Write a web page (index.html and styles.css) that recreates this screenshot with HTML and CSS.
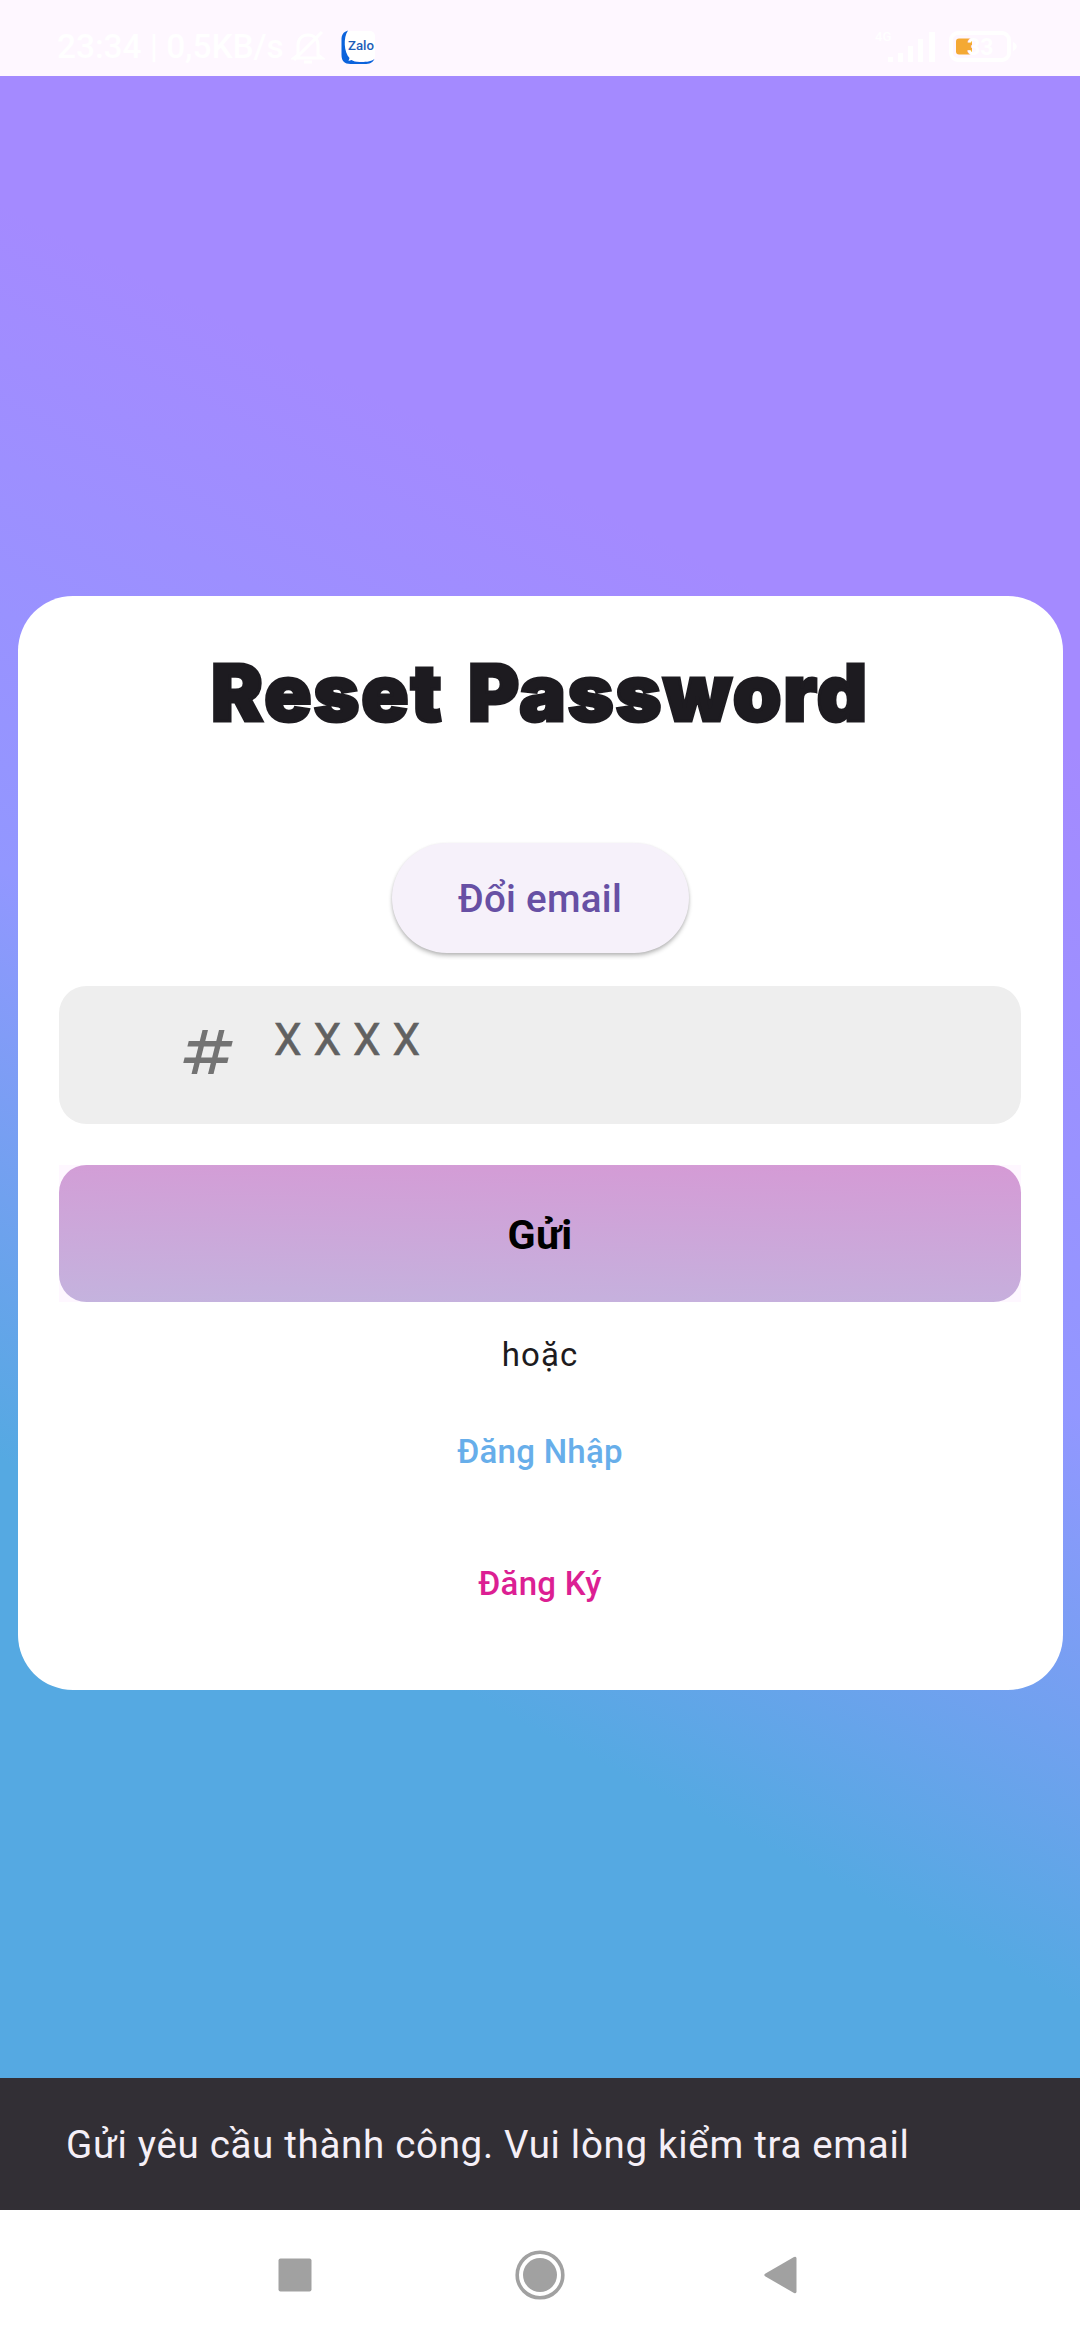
FILE: index.html
```html
<!DOCTYPE html>
<html lang="vi">
<head>
<meta charset="utf-8">
<title>Reset Password</title>
<link rel="stylesheet" href="styles.css">
</head>
<body>
<header class="status">
  <span class="status-text">23:34 | 0,5KB/s</span>
  <svg class="mute" viewBox="0 0 34 36" fill="none" stroke="currentColor" stroke-width="3"><path d="M7 26V16c0-6 4-10 10-10s10 4 10 10v10l4 3H3zM13 33h8M3 31 31 3"/></svg>
  <svg class="zalo" viewBox="0 0 34 35"><rect x="2" y="1" width="32" height="30" rx="5" fill="#fff"/><path d="M7 .5C2 2 .5 5 .5 10v15c0 6 3 9 9 9h14c5 0 8-1 10-5-4 3-10 3-15 3-4 0-6-1-8-2l-3 1 1-3C3 22 2 8 7 .5z" fill="#0b63dc"/><text class="zalo-text" x="7" y="20" textLength="26" lengthAdjust="spacingAndGlyphs">Zalo</text></svg>
  <span class="spacer"></span>
  <svg class="signal" viewBox="0 0 66 36"><text class="net" x="5" y="12">4G</text><path d="M18 28h5v5h-5zM28 24h5v9h-5zM38 17h5v16h-5zM48 10h5v23h-5zM59 3h6v30h-6z" fill="currentColor"/></svg>
  <svg class="battery" viewBox="0 0 70 32"><rect x="2" y="2" width="58" height="27" rx="7" fill="none" stroke="currentColor" stroke-width="4"/><path d="M64 11c5 2 5 7 0 9z" fill="currentColor"/><rect x="7" y="7.500" width="16" height="16" rx="3" fill="#f4a934"/><text class="charge" x="18" y="24">33</text></svg>
</header>
<main class="screen">
  <section class="card">
    <h1 class="title">Reset Password</h1>
    <button class="change">Đổi email</button>
    <label class="field">
      <svg class="hash" viewBox="0 0 24 24"><path fill="#737373" d="M20.500 10 21 8h-4l1-4h-2l-1 4h-4l1-4h-2L9 8H5l-.5 2h4l-1 4h-4L3 16h4l-1 4h2l1-4h4l-1 4h2l1-4h4l.5-2h-4l1-4h4zm-7 4h-4l1-4h4l-1 4z"/></svg>
      <span class="hint">X X X X</span>
    </label>
    <div class="submit-wrap"><button class="submit">Gửi</button></div>
    <p class="or">hoặc</p>
    <a class="link login">Đăng Nhập</a>
    <a class="link signup">Đăng Ký</a>
  </section>
</main>
<div class="snackbar">Gửi yêu cầu thành công. Vui lòng kiểm tra email</div>
<nav class="nav">
  <svg class="nav-icon" viewBox="0 0 50 50"><rect x="8.500" y="8.500" width="33" height="33" rx="2" fill="#a1a1a1"/></svg>
  <svg class="nav-icon" viewBox="0 0 50 50"><circle cx="25" cy="25" r="22.800" fill="none" stroke="#a1a1a1" stroke-width="3.600"/><circle cx="25" cy="25" r="17" fill="#a1a1a1"/></svg>
  <svg class="nav-icon" viewBox="0 0 50 50"><path d="M5.500 23.500 34 7q2.500-1 2.500 1.500v33q0 2.500-2.500 1.500L5.500 26.500q-2.500-1.500 0-3z" fill="#a1a1a1"/></svg>
</nav>
</body>
</html>
```
FILE: styles.css
```css
* { box-sizing: border-box; }
body {
  margin: 0;
  width: 1080px;
  height: 2340px;
  display: flex;
  flex-direction: column;
  font-family: Roboto, "Noto Sans", sans-serif;
  background: #fff;
}
button { border: 0; font-family: inherit; padding: 0; }
svg { display: block; flex: none; }

.status {
  height: 76px;
  padding: 18px 61px 0 57px;
  display: flex;
  align-items: center;
  background: #fef7ff;
  color: #fff;
}
.status-text {
  width: 234px;
  font-size: 33.5px;
  font-weight: 500;
  line-height: 40px;
  letter-spacing: -.1px;
  white-space: nowrap;
}
.mute { width: 34px; height: 36px; }
.zalo { width: 34px; height: 35px; margin-left: 16px; }
.zalo-text { font: 500 13px Roboto, sans-serif; fill: #1c5db8; }
.spacer { flex: 1; }
.signal { width: 66px; height: 36px; margin-right: 13px; }
.net { font: 500 13px Roboto, sans-serif; fill: #fff; }
.battery { width: 70px; height: 32px; }
.charge { font: 700 23px Roboto, sans-serif; fill: #fff; }

.screen {
  height: 2002px;
  padding: 520px 17.5px 0;
  background: linear-gradient(206.84deg, #a48aff 0, #a48aff 600px, #9297ff 1196px, #55a9e2 1722px) 0 0 / 1080px 2134px no-repeat;
}
.card {
  height: 1094px;
  padding: 47px 41.5px 0;
  border-radius: 55px;
  background: #fff;
  display: flex;
  flex-direction: column;
  align-items: center;
}
.title {
  margin: 0;
  height: 100px;
  line-height: 100px;
  font-family: Inter, sans-serif;
  font-size: 78px;
  font-weight: 900;
  letter-spacing: 1.9px;
  word-spacing: 7px;
  -webkit-text-stroke: 3px #1d1b20;
  color: #1d1b20;
  white-space: nowrap;
}
.change {
  margin-top: 100px;
  width: 297px;
  height: 110px;
  border-radius: 55px;
  background: #f6f1fa;
  color: #6750a4;
  font-size: 38.5px;
  font-weight: 500;
  letter-spacing: .28px;
  box-shadow: 0 3px 4px rgba(0, 0, 0, .22), 0 1px 3px rgba(0, 0, 0, .1);
}
.field {
  margin-top: 33px;
  width: 962px;
  height: 138px;
  padding: 33px 0 0 116px;
  border-radius: 27.5px;
  background: #eee;
  display: flex;
  align-items: flex-start;
}
.hash { width: 66px; height: 66px; }
.hint {
  margin: -7px 0 0 33px;
  font-size: 44px;
  line-height: 56px;
  letter-spacing: .5px;
  -webkit-text-stroke: .6px #616161;
  color: #616161;
}
.submit-wrap {
  margin-top: 41px;
  width: 962px;
  height: 137px;
  background: #fef7ff;
}
.submit {
  display: block;
  width: 962px;
  height: 137px;
  padding-top: 2px;
  border-radius: 27.5px;
  background: linear-gradient(181.5deg, #d59ad5, #c4b3de);
  color: #000;
  font-size: 41.25px;
  font-weight: 700;
  letter-spacing: .3px;
}
.or {
  margin: 33px 0 0;
  font-size: 33px;
  line-height: 40px;
  letter-spacing: 1.1px;
  color: #1d1b20;
}
.link { font-size: 33px; line-height: 40px; font-weight: 500; letter-spacing: .28px; }
.login { margin-top: 57px; color: #67aeea; }
.signup { margin-top: 92px; color: #dc1f93; }

.snackbar {
  height: 132px;
  padding-left: 66px;
  background: #322f35;
  color: #f5eff7;
  font-size: 38.5px;
  line-height: 133px;
  letter-spacing: .69px;
  white-space: nowrap;
}
.nav {
  height: 130px;
  display: flex;
  justify-content: center;
  align-items: center;
  gap: 195px;
  background: #fff;
}
.nav-icon { width: 50px; height: 50px; }
```
